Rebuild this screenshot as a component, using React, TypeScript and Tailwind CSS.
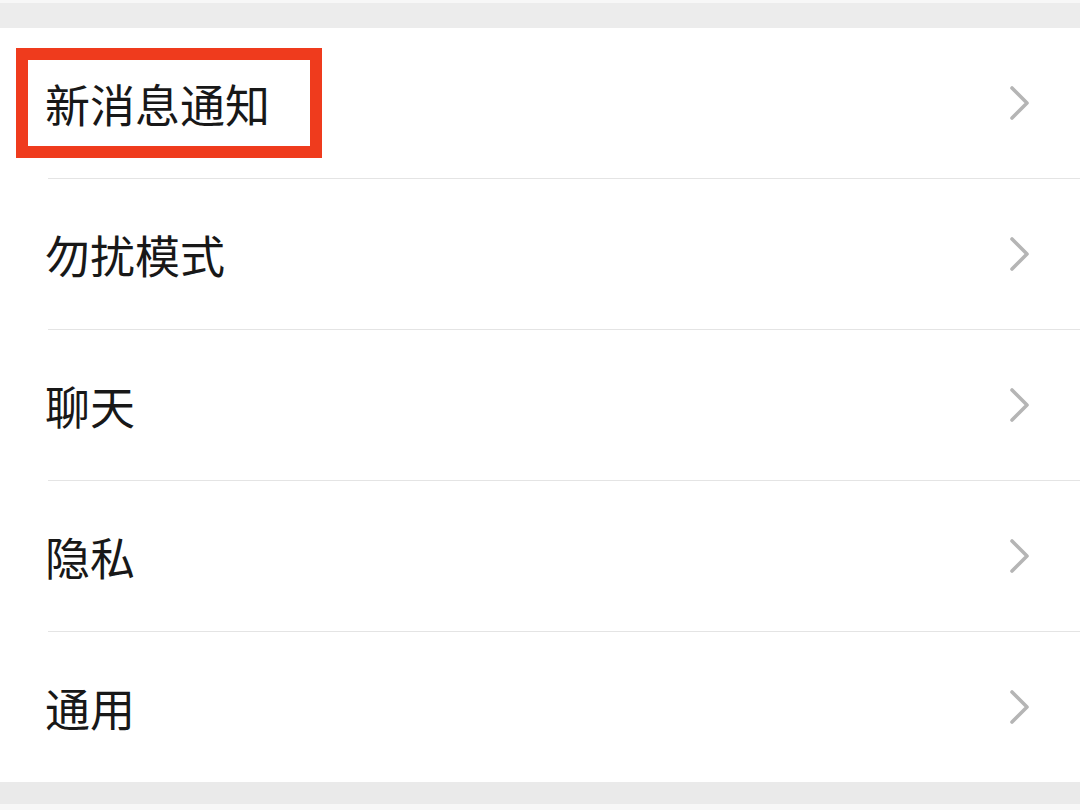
const items = ["新消息通知", "勿扰模式", "聊天", "隐私", "通用"];

function Chevron() {
  return (
    <svg width="22" height="36" viewBox="0 0 22 36" fill="none" className="shrink-0">
      <path d="M3 3 L18 18 L3 33" stroke="#b5b5b5" strokeWidth="3.6" strokeLinecap="round" strokeLinejoin="round" />
    </svg>
  );
}

export default function App() {
  return (
    <div
      className="w-[1080px] h-[810px] bg-[#f6f6f6] flex flex-col overflow-hidden"
      style={{ fontFamily: '"Noto Sans CJK SC", "Noto Sans", sans-serif' }}
    >
      <div className="h-[3px] bg-[#f7f7f7]" />
      <div className="h-[25px] bg-[#ececec]" />
      <div className="bg-white flex flex-col">
        {items.map((label, i) => (
          <div key={label} className="flex flex-col">
            {i > 0 && <div className="ml-[48px] h-px bg-[#e4e4e4]" />}
            <div className="relative h-[150px] flex items-center justify-between pl-[45px] pr-[49px]">
              <span className="text-[45px] leading-none text-[#181818] tracking-[0px]">{label}</span>
              <Chevron />
              {i === 0 && (
                <div className="absolute left-[16px] top-[20px] w-[306px] h-[110px] border-[12px] border-[#ef3b1d]" />
              )}
            </div>
          </div>
        ))}
      </div>
      <div className="h-[22px] bg-[#eaeaea]" />
      <div className="flex-1 bg-[#f7f7f7]" />
    </div>
  );
}
